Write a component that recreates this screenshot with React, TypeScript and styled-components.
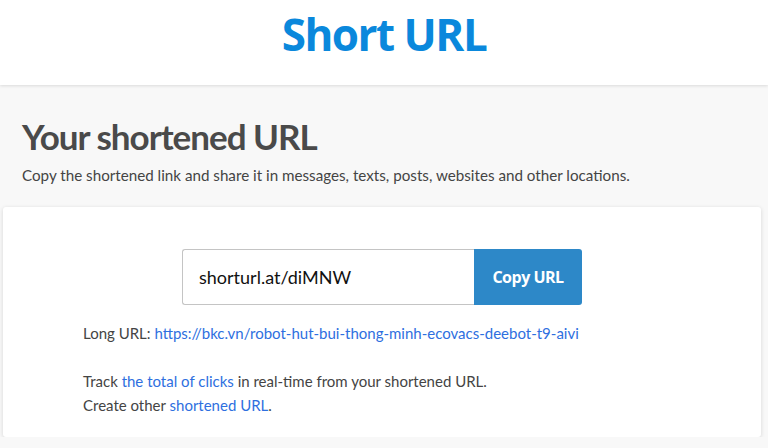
import styled, { createGlobalStyle } from "styled-components";

const Global = createGlobalStyle`
  html, body {
    margin: 0;
    padding: 0;
    background: #f8f8f8;
    font-family: Lato, "Liberation Sans", sans-serif;
  }
`;

const Header = styled.header`
  background: #fff;
  height: 85px;
  display: flex;
  justify-content: center;
  align-items: center;
  box-shadow: 0 1px 3px rgba(0, 0, 0, 0.12);
  position: relative;
`;

const Logo = styled.h1`
  margin: 0;
  font-family: "Open Sans", sans-serif;
  font-weight: 700;
  font-size: 44px;
  letter-spacing: -1.5px;
  color: #0a88dc;
  padding-bottom: 18px;
`;

const Main = styled.main`
  padding: 29px 7px 0 3px;
`;

const Intro = styled.section`
  padding: 0 19px;
`;

const Title = styled.h2`
  margin: 0;
  font-weight: 700;
  font-size: 35px;
  color: #4a4a4a;
  letter-spacing: -1px;
  line-height: 44px;
`;

const Lead = styled.p`
  margin: 7px 0 22px;
  font-size: 15.2px;
  color: #444;
  line-height: 20px;
`;

const Card = styled.div`
  background: #fff;
  border-radius: 3px;
  box-shadow: 0 1px 4px rgba(0, 0, 0, 0.14);
  padding: 42px 80px 22px;
  height: 230px;
  box-sizing: border-box;
`;

const Form = styled.div`
  display: flex;
  justify-content: center;
  margin-bottom: 16px;
`;

const Field = styled.input`
  width: 292px;
  height: 56px;
  box-sizing: border-box;
  border: 1px solid #c4c4c4;
  border-right: none;
  border-radius: 3px 0 0 3px;
  padding: 0 16px;
  font-family: Lato, sans-serif;
  font-size: 18px;
  color: #111;
  outline: none;
`;

const Button = styled.button`
  width: 108px;
  height: 56px;
  border: none;
  border-radius: 0 3px 3px 0;
  background: #2d88c8;
  color: #fff;
  font-family: "Open Sans", sans-serif;
  font-weight: 700;
  font-size: 16px;
  letter-spacing: -0.5px;
  cursor: pointer;
`;

const Line = styled.p<{ gap?: number }>`
  margin: 0 0 ${(p) => p.gap ?? 0}px;
  font-size: 15px;
  line-height: 24px;
  color: #444;
`;

const Link = styled.a`
  color: #2e6fe0;
  text-decoration: none;
`;

export default function App() {
  return (
    <>
      <Global />
      <Header>
        <Logo>Short URL</Logo>
      </Header>
      <Main>
        <Intro>
          <Title>Your shortened URL</Title>
          <Lead>
            Copy the shortened link and share it in messages, texts, posts, websites and other locations.
          </Lead>
        </Intro>
        <Card>
          <Form>
            <Field readOnly value="shorturl.at/diMNW" />
            <Button>Copy URL</Button>
          </Form>
          <Line gap={24}>
            Long URL: <Link href="#">https://bkc.vn/robot-hut-bui-thong-minh-ecovacs-deebot-t9-aivi</Link>
          </Line>
          <Line>
            Track <Link href="#">the total of clicks</Link> in real-time from your shortened URL.
          </Line>
          <Line>
            Create other <Link href="#">shortened URL</Link>.
          </Line>
        </Card>
      </Main>
    </>
  );
}
